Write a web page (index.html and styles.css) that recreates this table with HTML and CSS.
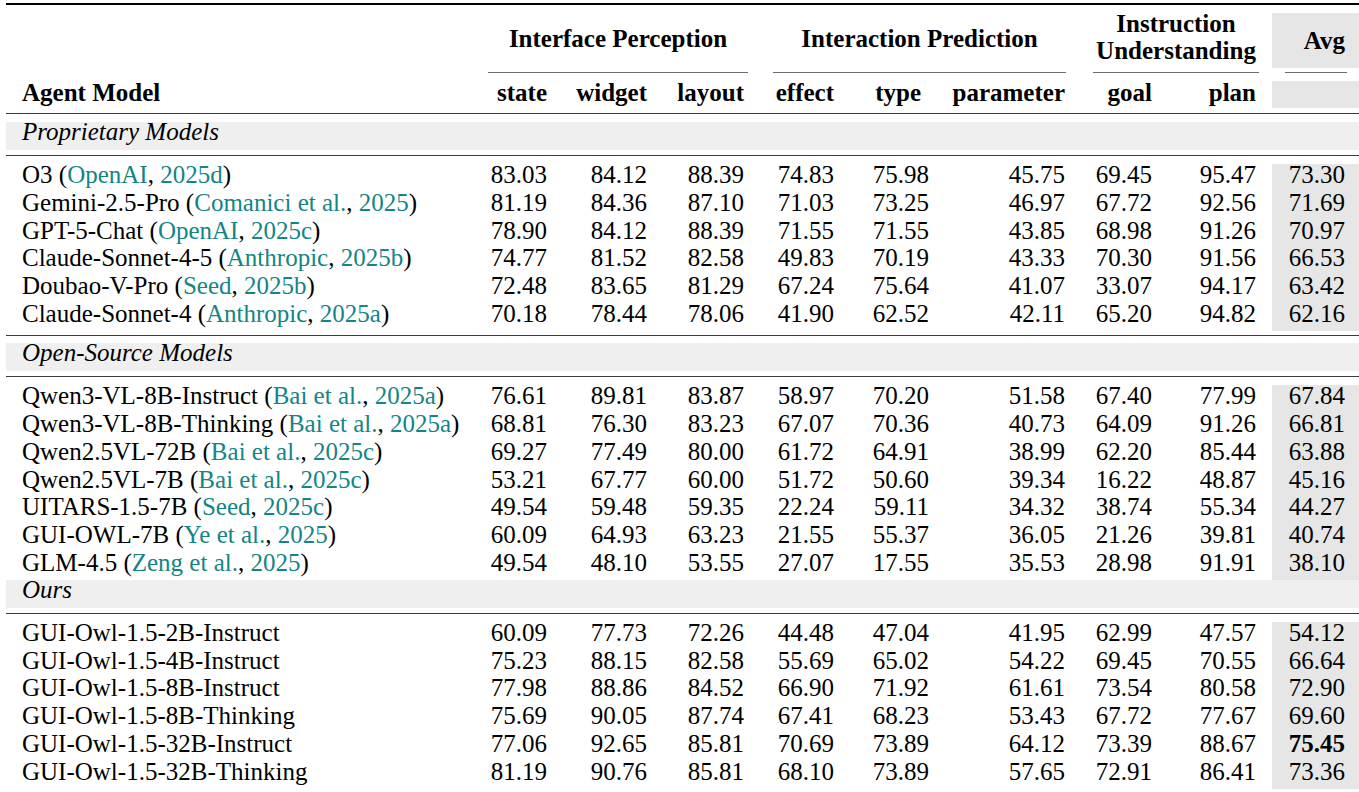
FILE: index.html
```html
<!DOCTYPE html>
<html lang="en">
<head>
<meta charset="utf-8">
<title>GUI understanding benchmark results</title>
<link rel="stylesheet" href="styles.css">
</head>
<body>
<div class="table">
  <div class="toprule"></div>

  <div class="row head1">
    <div class="c1"></div>
    <div class="group g-ip">Interface Perception</div>
    <div class="group g-ia">Interaction Prediction</div>
    <div class="group g-iu two">Instruction<br>Understanding</div>
    <div class="avg-head1">Avg</div>
  </div>
  <div class="row cmids">
    <div class="cmid g-ip"></div>
    <div class="cmid g-ia"></div>
    <div class="cmid g-iu"></div>
    <div class="cmid g-avg"></div>
  </div>
  <div class="row head2">
    <div class="c1">Agent Model</div>
    <div>state</div>
    <div>widget</div>
    <div class="pr4">layout</div>
    <div>effect</div>
    <div class="pr8">type</div>
    <div class="pr1">parameter</div>
    <div>goal</div>
    <div class="pr3">plan</div>
    <div class="avg"></div>
  </div>
  <div class="midrule"></div>

  <div class="band">Proprietary Models</div>
  <div class="rule after-band"></div>

  <div class="row data">
    <div class="c1">O3 (<span class="cite">OpenAI</span>, <span class="cite">2025d</span>)</div>
    <div>83.03</div><div>84.12</div><div class="pr4">88.39</div><div>74.83</div><div>75.98</div><div class="pr1">45.75</div><div>69.45</div><div class="pr3">95.47</div><div class="avg">73.30</div>
  </div>
  <div class="row data">
    <div class="c1">Gemini-2.5-Pro (<span class="cite">Comanici et al.</span>, <span class="cite">2025</span>)</div>
    <div>81.19</div><div>84.36</div><div class="pr4">87.10</div><div>71.03</div><div>73.25</div><div class="pr1">46.97</div><div>67.72</div><div class="pr3">92.56</div><div class="avg">71.69</div>
  </div>
  <div class="row data">
    <div class="c1">GPT-5-Chat (<span class="cite">OpenAI</span>, <span class="cite">2025c</span>)</div>
    <div>78.90</div><div>84.12</div><div class="pr4">88.39</div><div>71.55</div><div>71.55</div><div class="pr1">43.85</div><div>68.98</div><div class="pr3">91.26</div><div class="avg">70.97</div>
  </div>
  <div class="row data">
    <div class="c1">Claude-Sonnet-4-5 (<span class="cite">Anthropic</span>, <span class="cite">2025b</span>)</div>
    <div>74.77</div><div>81.52</div><div class="pr4">82.58</div><div>49.83</div><div>70.19</div><div class="pr1">43.33</div><div>70.30</div><div class="pr3">91.56</div><div class="avg">66.53</div>
  </div>
  <div class="row data">
    <div class="c1">Doubao-V-Pro (<span class="cite">Seed</span>, <span class="cite">2025b</span>)</div>
    <div>72.48</div><div>83.65</div><div class="pr4">81.29</div><div>67.24</div><div>75.64</div><div class="pr1">41.07</div><div>33.07</div><div class="pr3">94.17</div><div class="avg">63.42</div>
  </div>
  <div class="row data">
    <div class="c1">Claude-Sonnet-4 (<span class="cite">Anthropic</span>, <span class="cite">2025a</span>)</div>
    <div>70.18</div><div>78.44</div><div class="pr4">78.06</div><div>41.90</div><div>62.52</div><div class="pr1">42.11</div><div>65.20</div><div class="pr3">94.82</div><div class="avg">62.16</div>
  </div>
  <div class="rule after-rows"></div>

  <div class="band">Open-Source Models</div>
  <div class="rule after-band"></div>

  <div class="row data">
    <div class="c1">Qwen3-VL-8B-Instruct (<span class="cite">Bai et al.</span>, <span class="cite">2025a</span>)</div>
    <div>76.61</div><div>89.81</div><div class="pr4">83.87</div><div>58.97</div><div>70.20</div><div class="pr1">51.58</div><div>67.40</div><div class="pr3">77.99</div><div class="avg">67.84</div>
  </div>
  <div class="row data">
    <div class="c1">Qwen3-VL-8B-Thinking (<span class="cite">Bai et al.</span>, <span class="cite">2025a</span>)</div>
    <div>68.81</div><div>76.30</div><div class="pr4">83.23</div><div>67.07</div><div>70.36</div><div class="pr1">40.73</div><div>64.09</div><div class="pr3">91.26</div><div class="avg">66.81</div>
  </div>
  <div class="row data">
    <div class="c1">Qwen2.5VL-72B (<span class="cite">Bai et al.</span>, <span class="cite">2025c</span>)</div>
    <div>69.27</div><div>77.49</div><div class="pr4">80.00</div><div>61.72</div><div>64.91</div><div class="pr1">38.99</div><div>62.20</div><div class="pr3">85.44</div><div class="avg">63.88</div>
  </div>
  <div class="row data">
    <div class="c1">Qwen2.5VL-7B (<span class="cite">Bai et al.</span>, <span class="cite">2025c</span>)</div>
    <div>53.21</div><div>67.77</div><div class="pr4">60.00</div><div>51.72</div><div>50.60</div><div class="pr1">39.34</div><div>16.22</div><div class="pr3">48.87</div><div class="avg">45.16</div>
  </div>
  <div class="row data">
    <div class="c1">UITARS-1.5-7B (<span class="cite">Seed</span>, <span class="cite">2025c</span>)</div>
    <div>49.54</div><div>59.48</div><div class="pr4">59.35</div><div>22.24</div><div>59.11</div><div class="pr1">34.32</div><div>38.74</div><div class="pr3">55.34</div><div class="avg">44.27</div>
  </div>
  <div class="row data">
    <div class="c1">GUI-OWL-7B (<span class="cite">Ye et al.</span>, <span class="cite">2025</span>)</div>
    <div>60.09</div><div>64.93</div><div class="pr4">63.23</div><div>21.55</div><div>55.37</div><div class="pr1">36.05</div><div>21.26</div><div class="pr3">39.81</div><div class="avg">40.74</div>
  </div>
  <div class="row data">
    <div class="c1">GLM-4.5 (<span class="cite">Zeng et al.</span>, <span class="cite">2025</span>)</div>
    <div>49.54</div><div>48.10</div><div class="pr4">53.55</div><div>27.07</div><div>17.55</div><div class="pr1">35.53</div><div>28.98</div><div class="pr3">91.91</div><div class="avg">38.10</div>
  </div>

  <div class="band">Ours</div>
  <div class="rule after-band"></div>

  <div class="row data">
    <div class="c1">GUI-Owl-1.5-2B-Instruct</div>
    <div>60.09</div><div>77.73</div><div class="pr4">72.26</div><div>44.48</div><div>47.04</div><div class="pr1">41.95</div><div>62.99</div><div class="pr3">47.57</div><div class="avg">54.12</div>
  </div>
  <div class="row data">
    <div class="c1">GUI-Owl-1.5-4B-Instruct</div>
    <div>75.23</div><div>88.15</div><div class="pr4">82.58</div><div>55.69</div><div>65.02</div><div class="pr1">54.22</div><div>69.45</div><div class="pr3">70.55</div><div class="avg">66.64</div>
  </div>
  <div class="row data">
    <div class="c1">GUI-Owl-1.5-8B-Instruct</div>
    <div>77.98</div><div>88.86</div><div class="pr4">84.52</div><div>66.90</div><div>71.92</div><div class="pr1">61.61</div><div>73.54</div><div class="pr3">80.58</div><div class="avg">72.90</div>
  </div>
  <div class="row data">
    <div class="c1">GUI-Owl-1.5-8B-Thinking</div>
    <div>75.69</div><div>90.05</div><div class="pr4">87.74</div><div>67.41</div><div>68.23</div><div class="pr1">53.43</div><div>67.72</div><div class="pr3">77.67</div><div class="avg">69.60</div>
  </div>
  <div class="row data">
    <div class="c1">GUI-Owl-1.5-32B-Instruct</div>
    <div>77.06</div><div>92.65</div><div class="pr4">85.81</div><div>70.69</div><div>73.89</div><div class="pr1">64.12</div><div>73.39</div><div class="pr3">88.67</div><div class="avg best">75.45</div>
  </div>
  <div class="row data">
    <div class="c1">GUI-Owl-1.5-32B-Thinking</div>
    <div>81.19</div><div>90.76</div><div class="pr4">85.81</div><div>68.10</div><div>73.89</div><div class="pr1">57.65</div><div>72.91</div><div class="pr3">86.41</div><div class="avg">73.36</div>
  </div>
</div>
</body>
</html>
```

FILE: styles.css
```css
html, body {
  margin: 0;
  padding: 0;
  background: #ffffff;
}

body {
  padding-top: 3px;
  font-family: "Liberation Serif", "Times New Roman", serif;
  font-size: 25px;
  color: #000000;
}

.table {
  width: 1353px;
  margin-left: 6px;
}

.toprule {
  height: 2px;
  background: #000000;
}

.row {
  display: grid;
  grid-template-columns: 480px 61px 100px 101px 86px 95px 137px 86px 107px 13px 87px;
}

.row > div {
  text-align: right;
  white-space: nowrap;
}

.row > .c1 {
  text-align: left;
  padding-left: 16px;
}

.pr1 { padding-right: 1px; }
.pr3 { padding-right: 3px; }
.pr4 { padding-right: 4px; }
.pr8 { padding-right: 8px; }

/* header row 1 */
.head1 {
  height: 63px;
  font-weight: bold;
}

.head1 > .group {
  text-align: center;
  line-height: 27.7px;
  padding-top: 19.5px;
}

.head1 > .group.two {
  line-height: 27.3px;
  padding-top: 4.6px;
}

.g-ip { grid-column: 2 / 5; margin-left: 2px; }
.g-ia { grid-column: 5 / 8; margin-left: 25px; }
.g-iu { grid-column: 8 / 10; margin-left: 27px; }
.g-avg { grid-column: 11 / 12; margin-left: 13px; margin-right: 12px; }

.avg-head1 {
  grid-column: 11 / 12;
  margin-top: 8px;
  height: 55px;
  line-height: 55px;
  background: #e6e6e6;
  padding-right: 14px;
}

/* cmidrules */
.cmids {
  height: 13px;
}

.cmid {
  margin-top: 4px;
  height: 1px;
  background: #6e6e6e;
}

/* header row 2 */
.head2 {
  font-weight: bold;
}

.head2 > div {
  line-height: 23px;
  padding-bottom: 4px;
}

.avg {
  grid-column: 11 / 12;
  background: #e6e6e6;
  padding-right: 14px;
}

.midrule {
  margin-top: 5px;
  margin-bottom: 8px;
  height: 1px;
  background: #3c3c3c;
}

.band {
  background: #efefef;
  font-style: italic;
  padding-left: 16px;
  line-height: 19px;
  padding-bottom: 9px;
}

.rule {
  height: 1px;
  background: #3c3c3c;
}

.rule.after-band {
  margin-top: 5px;
  margin-bottom: 8px;
}

.rule.after-rows {
  margin-top: 4.5px;
  margin-bottom: 7px;
}

.data > div {
  line-height: 22.2px;
  padding-bottom: 5.6px;
}

.cite {
  color: #138585;
}

.best {
  font-weight: bold;
}
```
